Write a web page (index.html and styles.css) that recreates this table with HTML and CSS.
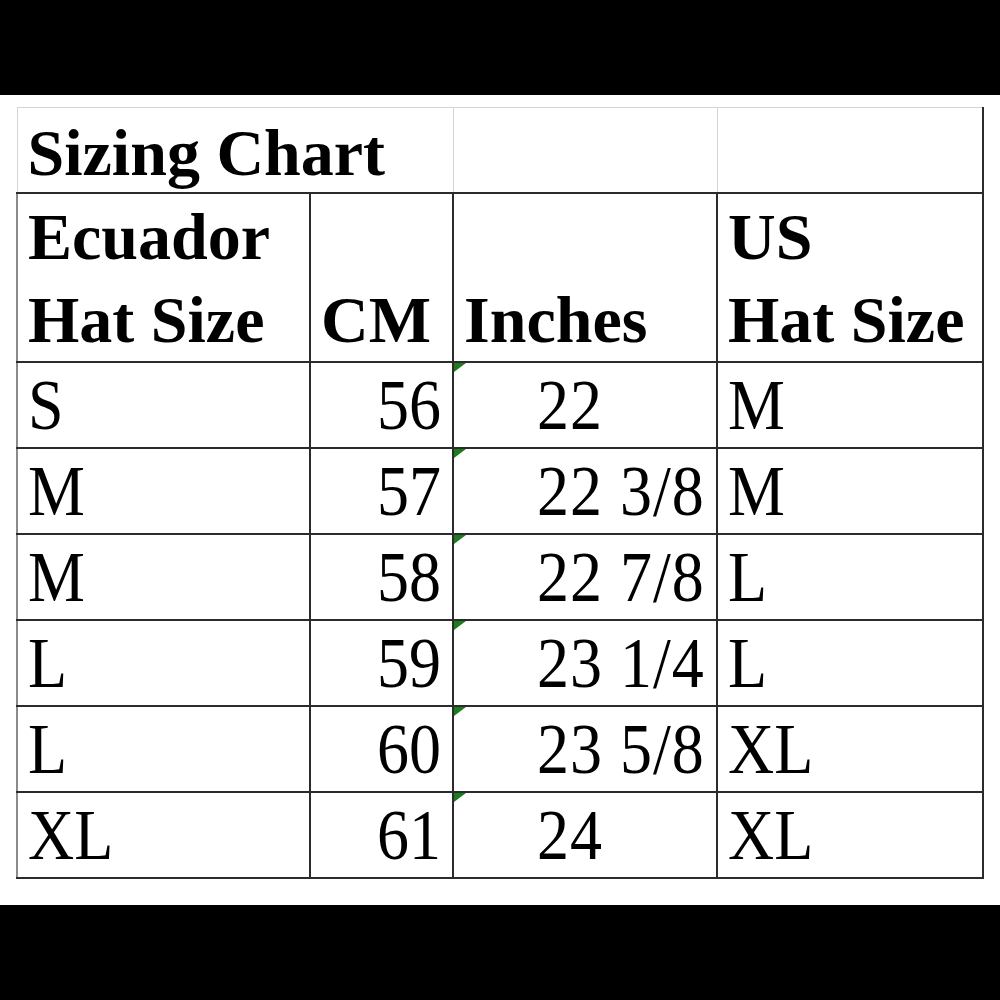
FILE: index.html
```html
<!DOCTYPE html>
<html>
<head>
<meta charset="utf-8">
<link rel="stylesheet" href="styles.css">
</head>
<body>
<div class="frame">
  <table class="chart">
    <colgroup>
      <col class="c1"><col class="c2"><col class="c3"><col class="c4">
    </colgroup>
    <tr class="title-row">
      <td colspan="2" class="title">Sizing Chart</td>
      <td class="blank"></td>
      <td class="blank last"></td>
    </tr>
    <tr class="head-row">
      <th class="left">Ecuador<br>Hat Size</th>
      <th class="cm-head">CM</th>
      <th class="left">Inches</th>
      <th class="left">US<br>Hat Size</th>
    </tr>
    <tr class="data"><td><span class="tx">S</span></td><td class="num"><span class="tx">56</span></td><td class="inch"><span class="flag"></span><span class="tx">22</span></td><td class="us"><span class="tx">M</span></td></tr>
    <tr class="data"><td><span class="tx">M</span></td><td class="num"><span class="tx">57</span></td><td class="inch"><span class="flag"></span><span class="tx">22 3/8</span></td><td class="us"><span class="tx">M</span></td></tr>
    <tr class="data"><td><span class="tx">M</span></td><td class="num"><span class="tx">58</span></td><td class="inch"><span class="flag"></span><span class="tx">22 7/8</span></td><td class="us"><span class="tx">L</span></td></tr>
    <tr class="data"><td><span class="tx">L</span></td><td class="num"><span class="tx">59</span></td><td class="inch"><span class="flag"></span><span class="tx">23 1/4</span></td><td class="us"><span class="tx">L</span></td></tr>
    <tr class="data"><td><span class="tx">L</span></td><td class="num"><span class="tx">60</span></td><td class="inch"><span class="flag"></span><span class="tx">23 5/8</span></td><td class="us"><span class="tx">XL</span></td></tr>
    <tr class="data"><td><span class="tx">XL</span></td><td class="num"><span class="tx">61</span></td><td class="inch"><span class="flag"></span><span class="tx">24</span></td><td class="us"><span class="tx">XL</span></td></tr>
  </table>
</div>
</body>
</html>
```

FILE: styles.css
```css
html, body {
  margin: 0;
  padding: 0;
  background: #000;
}
body {
  width: 1000px;
  height: 1000px;
  padding-top: 95px;
  box-sizing: border-box;
}
.frame {
  background: #fff;
  height: 810px;
  padding: 12px 0 0 16px;
  box-sizing: border-box;
}
.chart {
  border-collapse: collapse;
  table-layout: fixed;
  width: 966px;
  font-family: "Liberation Serif", "Times New Roman", serif;
  color: #000;
}
.c1 { width: 293px; }
.c2 { width: 143px; }
.c3 { width: 264px; }
.c4 { width: 266px; }
td, th {
  border: 2px solid #2b2b2b;
  padding: 0 10px;
  vertical-align: bottom;
  white-space: nowrap;
  overflow: visible;
  position: relative;
}
.title-row td {
  height: 84px;
  border-top: 1px solid #d4d4d4;
  border-left: 1px solid #d4d4d4;
  border-right: 1px solid #d4d4d4;
}
.title-row td.last { border-right: 2px solid #2b2b2b; }
.title {
  font-weight: bold;
  font-size: 66px;
  line-height: 78px;
  padding-left: 10px;
}
.head-row th {
  height: 167px;
  font-weight: bold;
  font-size: 66px;
  line-height: 83px;
  text-align: left;
  padding-bottom: 0;
}
.head-row th.cm-head { text-align: left; padding-left: 10px; }
.data td {
  height: 84px;
  font-size: 64px;
  line-height: 78px;
}
.tx {
  display: inline-block;
  transform: scaleY(1.12);
  transform-origin: 0 61px;
}
.chart tr > :first-child { border-left: 2px solid #8a8a8a; }
.title-row td:first-child { border-left: 1px solid #d4d4d4; }
.num { text-align: right; padding-right: 11px; }
.inch { padding-left: 83px; letter-spacing: 1px; }
.us { padding-left: 10px; }
.flag {
  position: absolute;
  top: 0;
  left: 0;
  width: 0;
  height: 0;
  border-top: 9px solid #1e7b1e;
  border-right: 12px solid transparent;
}
```
